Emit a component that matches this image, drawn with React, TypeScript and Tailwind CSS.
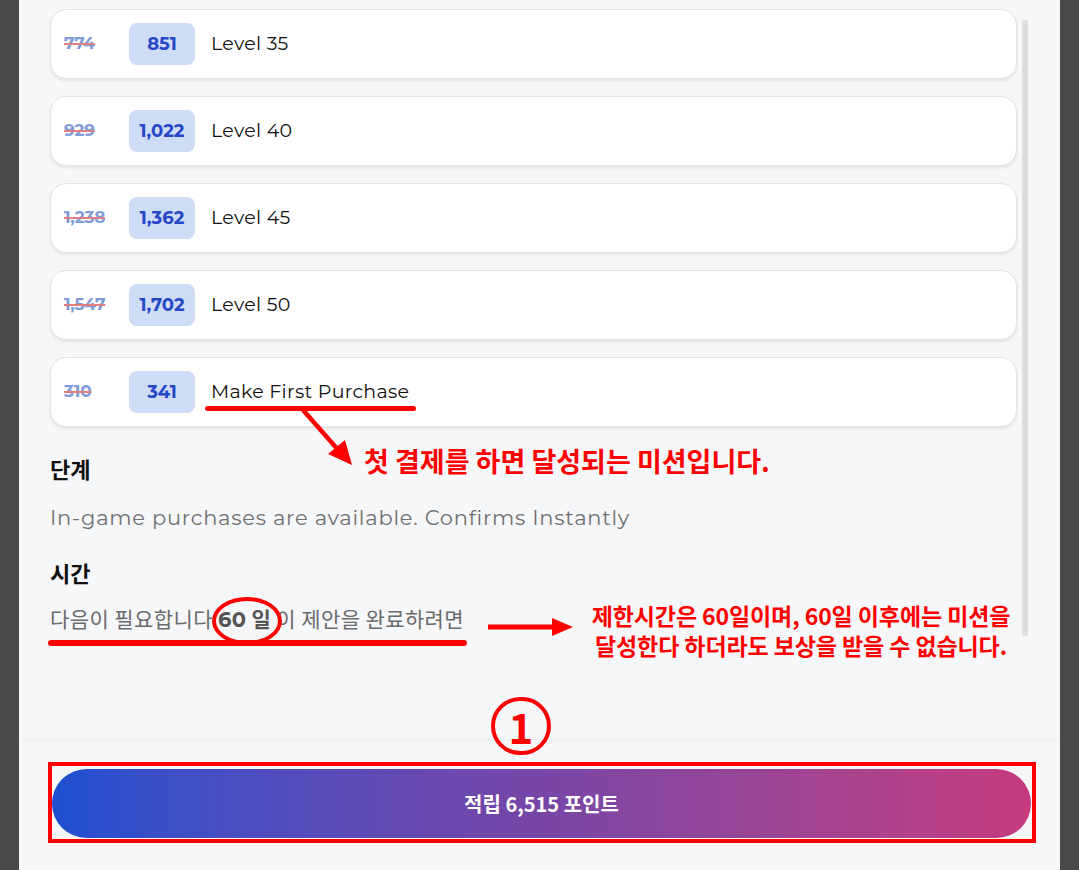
const levels = [
  { old: "774", now: "851", label: "Level 35" },
  { old: "929", now: "1,022", label: "Level 40" },
  { old: "1,238", now: "1,362", label: "Level 45" },
  { old: "1,547", now: "1,702", label: "Level 50" },
  { old: "310", now: "341", label: "Make First Purchase" },
];

const latin = "font-['Montserrat','Open_Sans','Noto_Sans_CJK_KR',sans-serif]";
const kr = "font-['Noto_Sans_CJK_KR','Noto_Sans',sans-serif]";

const RewardRow = ({ old, now, label }: { old: string; now: string; label: string }) => (
  <div className="flex h-[70px] items-center rounded-[16px] border border-[#e4e4e7] bg-white pl-[13px] shadow-[0_2px_3px_rgba(0,0,0,0.08)]">
    <span
      className={`w-[65px] text-[17px] font-bold tracking-[-0.3px] text-[#7f9bd8] line-through decoration-[#e07f7f] decoration-2 ${latin}`}
    >
      {old}
    </span>
    <span
      className={`flex h-[42px] w-[66px] items-center justify-center rounded-[8px] bg-[#cfdcf5] text-[18px] font-bold text-[#2548c8] ${latin}`}
    >
      {now}
    </span>
    <span className={`ml-[16px] text-[19px] tracking-[0.3px] text-[#111] ${latin}`}>{label}</span>
  </div>
);

export default function App() {
  return (
    <div className="relative flex h-[870px] w-[1079px] overflow-hidden bg-[#48494b]">
      <div className="ml-[19px] flex h-full w-[1041px] flex-col bg-[#f6f7f9]">
        {/* scroll area */}
        <div className="flex h-[739px] shrink-0">
          <div className="flex w-[1003px] flex-col pl-[31px] pr-[5px] pt-[9px]">
            <div className="flex flex-col gap-[17px]">
              {levels.map((l) => (
                <RewardRow key={l.label} {...l} />
              ))}
            </div>
            <h3 className={`mt-[25px] self-start text-[22px] font-bold text-[#111] ${kr}`}>단계</h3>
            <p className={`mt-[17px] self-start text-[21px] tracking-[0.75px] text-[#707070] ${latin}`}>
              In-game purchases are available. Confirms Instantly
            </p>
            <h3 className={`mt-[22px] self-start text-[22px] font-bold text-[#111] ${kr}`}>시간</h3>
            <p className={`mt-[14px] self-start text-[21px] tracking-[0.4px] text-[#6b6b6b] ${kr}`}>
              다음이 필요합니다{" "}
              <span className={`font-bold text-[#555] ${latin}`}>60</span>{" "}
              <span className="font-bold text-[#555]">일</span> 이 제안을 완료하려면
            </p>
          </div>
          <div className="mt-[20px] h-[616px] w-[6px] rounded-full bg-[#dedede]" />
        </div>
        {/* footer */}
        <div className="flex flex-1 flex-col border-t border-[#eceef1] px-[33px] pt-[29px]">
          <button
            className={`flex h-[69px] w-[979px] items-center justify-center rounded-full bg-gradient-to-r from-[#1c4fd0] via-[#7745a6] to-[#c53a7e] text-[20px] font-semibold text-white ${kr}`}
          >
            적립 6,515 포인트
          </button>
        </div>
      </div>

      {/* annotations */}
      <div className="absolute left-[205px] top-[406px] h-[5px] w-[211px] rounded-full bg-[#ff0000]" />
      <svg className="absolute left-[295px] top-[402px]" width="70" height="70" viewBox="0 0 70 70">
        <line x1="8" y1="8" x2="45" y2="50" stroke="#ff0000" strokeWidth="4.5" />
        <polygon points="57,63 33,52 50,38" fill="#ff0000" />
      </svg>
      <div className={`absolute left-[364px] top-[443px] text-[27px] font-bold leading-[36px] text-[#ff0000] ${kr}`}>
        첫 결제를 하면 달성되는 미션입니다.
      </div>

      <div className="absolute left-[48px] top-[640px] h-[6px] w-[419px] rounded-full bg-[#ff0000]" />
      <div className="absolute left-[212px] top-[597px] h-[48px] w-[70px] rounded-[50%] border-[4px] border-[#ff0000]" />
      <svg className="absolute left-[486px] top-[615px]" width="88" height="24" viewBox="0 0 88 24">
        <rect x="2" y="9.5" width="66" height="5" fill="#ff0000" />
        <polygon points="66,3 87,12 66,21" fill="#ff0000" />
      </svg>
      <div
        className={`absolute left-[576px] top-[600px] w-[450px] text-center text-[23px] font-bold leading-[30px] tracking-[-0.1px] text-[#ff0000] ${kr}`}
      >
        제한시간은 60일이며, 60일 이후에는 미션을
        <br />
        달성한다 하더라도 보상을 받을 수 없습니다.
      </div>

      <div
        className={`absolute left-[491px] top-[697px] flex h-[58px] w-[60px] items-center justify-center rounded-full border-[4px] border-[#ff0000] text-[42px] font-semibold leading-none text-[#ff0000] ${kr}`}
      >
        1
      </div>
      <div className="absolute left-[48px] top-[762px] h-[81px] w-[988px] border-[4px] border-[#ff0000]" />
    </div>
  );
}
